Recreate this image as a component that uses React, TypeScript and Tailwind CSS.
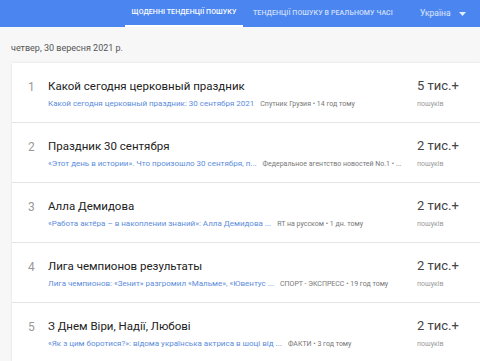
import { Fragment } from "react";

const rows = [
  {
    n: 1,
    title: "Какой сегодня церковный праздник",
    link: "Какой сегодня церковный праздник: 30 сентября 2021",
    source: "Спутник Грузия • 14 год тому",
    count: "5 тис.+",
  },
  {
    n: 2,
    title: "Праздник 30 сентября",
    link: "«Этот день в истории». Что произошло 30 сентября, п...",
    source: "Федеральное агентство новостей No.1 • ...",
    count: "2 тис.+",
  },
  {
    n: 3,
    title: "Алла Демидова",
    link: "«Работа актёра – в накоплении знаний»: Алла Демидова ...",
    source: "RT на русском • 1 дн. тому",
    count: "2 тис.+",
  },
  {
    n: 4,
    title: "Лига чемпионов результаты",
    link: "Лига чемпионов: «Зенит» разгромил «Мальме», «Ювентус ...",
    source: "СПОРТ - ЭКСПРЕСС • 19 год тому",
    count: "2 тис.+",
  },
  {
    n: 5,
    title: "З Днем Віри, Надії, Любові",
    link: "«Як з цим боротися?»: відома українська актриса в шоці від ...",
    source: "ФАКТИ • 3 год тому",
    count: "2 тис.+",
  },
];

export default function App() {
  return (
    <div className="w-[480px] h-[361px] overflow-hidden bg-[#f7f7f7] font-['Roboto',sans-serif]">
      <header className="h-[27px] bg-[#4b86f0] flex items-stretch">
        <div className="w-[125px]" />
        <div className="w-[118px] flex items-center justify-center border-b-[2px] border-white text-[7px] font-medium text-white tracking-[0.1px]">
          ЩОДЕННІ ТЕНДЕНЦІЇ ПОШУКУ
        </div>
        <div className="w-[160px] flex items-center pl-[10px] text-[7px] font-medium text-white/75 tracking-[0.1px]">
          ТЕНДЕНЦІЇ ПОШУКУ В РЕАЛЬНОМУ ЧАСІ
        </div>
        <div className="flex items-center pl-[17px] text-[8.5px] text-white/80">
          Україна
          <svg className="ml-[8px]" width="7" height="4" viewBox="0 0 7 4">
            <path d="M0 0h7L3.5 4z" fill="rgba(255,255,255,0.85)" />
          </svg>
        </div>
      </header>

      <div className="pl-[11px] pt-[15px] h-[36px] text-[9px] text-[#555]">
        четвер, 30 вересня 2021 р.
      </div>

      <div className="ml-[12px] bg-white shadow-[0_0_2px_rgba(0,0,0,0.12)]">
        {rows.map((r, i) => (
          <Fragment key={r.n}>
            {i > 0 && <div className="h-px bg-[#e4e4e4]" />}
            <div className="h-[59px] flex">
              <div className="w-[36px] pt-[15px] pl-[16px] text-[12px] text-[#999]">{r.n}</div>
              <div className="flex-1 min-w-0 overflow-hidden pt-[15px] pr-[12px]">
                <div className="text-[11.5px] leading-[16px] text-[#222]">{r.title}</div>
                <div className="mt-[4px] flex items-baseline whitespace-nowrap overflow-hidden">
                  <span className="text-[8px] text-[#5c8ddb]">{r.link}</span>
                  <span className="ml-[6px] text-[7px] text-[#777]">{r.source}</span>
                </div>
              </div>
              <div className="w-[63px] pt-[14px]">
                <div className="text-[13px] leading-[18px] text-[#444]">{r.count}</div>
                <div className="mt-[4px] text-[7px] text-[#999]">пошуків</div>
              </div>
            </div>
          </Fragment>
        ))}
      </div>
    </div>
  );
}
